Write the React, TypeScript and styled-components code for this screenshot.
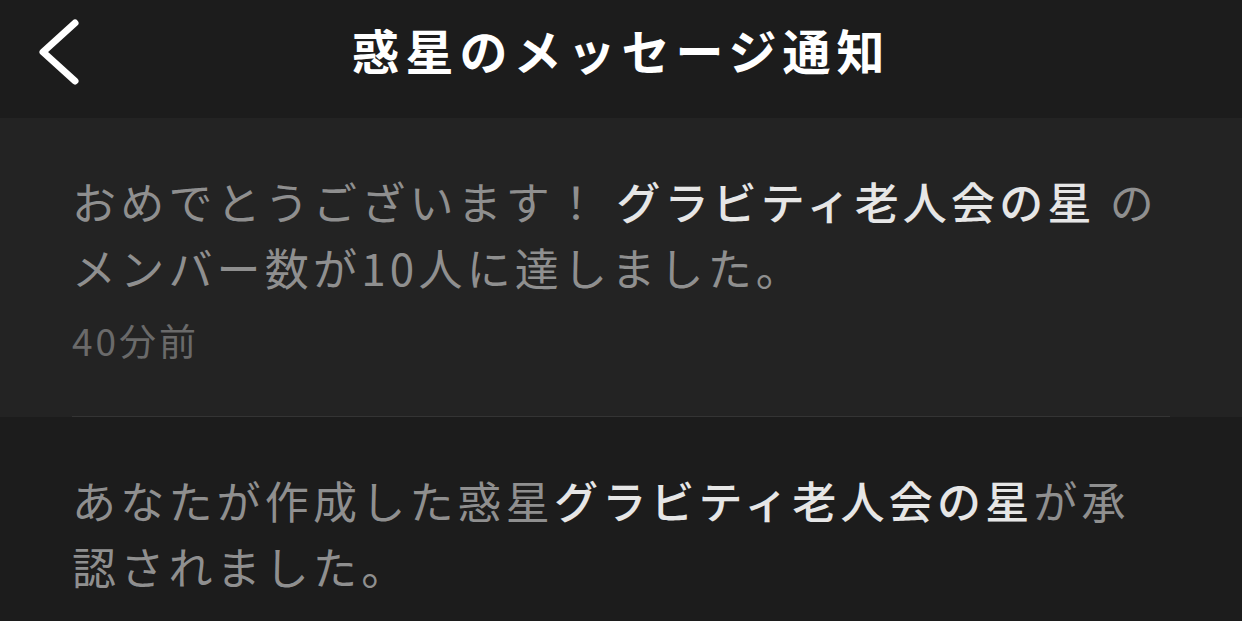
import React from 'react';
import styled, { createGlobalStyle } from 'styled-components';

const GlobalStyle = createGlobalStyle`
  html, body {
    margin: 0;
    padding: 0;
    background: #1c1c1c;
  }
  body {
    font-family: "Noto Sans CJK JP", "Noto Sans", sans-serif;
  }
`;

const Screen = styled.div`
  width: 1242px;
  height: 621px;
  overflow: hidden;
  background: #1c1c1c;
  display: flex;
  flex-direction: column;
`;

const Header = styled.header`
  height: 118px;
  flex: none;
  position: relative;
  display: flex;
  align-items: center;
  justify-content: center;
  background: #1c1c1c;
`;

const BackButton = styled.button`
  position: absolute;
  left: 34px;
  top: 16px;
  width: 50px;
  height: 70px;
  padding: 0;
  border: none;
  background: transparent;
  display: flex;
  align-items: center;
  justify-content: center;
`;

const Title = styled.h1`
  margin: 0 0 20px;
  font-size: 48px;
  font-weight: 700;
  letter-spacing: 6px;
  color: #ffffff;
  line-height: 1;
`;

const Item = styled.div<{ $active?: boolean }>`
  background: ${(p) => (p.$active ? '#232323' : '#1c1c1c')};
  padding: 50px 72px 0;
`;

const ItemBody = styled.div<{ $divider?: boolean }>`
  padding-bottom: ${(p) => (p.$divider ? '54px' : '0')};
  border-bottom: ${(p) => (p.$divider ? '1px solid #343434' : 'none')};
`;

const Message = styled.p`
  margin: 0;
  padding: 0;
  max-width: 1100px;
  font-size: 44px;
  line-height: 66px;
  letter-spacing: 4.2px;
  color: #8f8f8f;
  font-weight: 400;
`;

const Planet = styled.span`
  color: #e6e6e6;
  font-weight: 500;
`;

const Time = styled.div`
  margin-top: 18px;
  font-size: 37px;
  line-height: 44px;
  letter-spacing: 3px;
  color: #6a6a6a;
`;

function ChevronLeft() {
  return (
    <svg width="50" height="70" viewBox="0 0 50 70">
      <polyline
        points="41,7 9,36 41,65"
        fill="none"
        stroke="#ffffff"
        strokeWidth="7"
        strokeLinecap="round"
        strokeLinejoin="round"
      />
    </svg>
  );
}

export default function App() {
  return (
    <Screen>
      <GlobalStyle />
      <Header>
        <BackButton aria-label="戻る">
          <ChevronLeft />
        </BackButton>
        <Title>惑星のメッセージ通知</Title>
      </Header>

      <Item $active>
        <ItemBody $divider>
          <Message>
            おめでとうございます！ <Planet>グラビティ老人会の星</Planet> の<br />
            メンバー数が10人に達しました。
          </Message>
          <Time>40分前</Time>
        </ItemBody>
      </Item>

      <Item>
        <ItemBody>
          <Message>
            あなたが作成した惑星<Planet>グラビティ老人会の星</Planet>が承<br />
            認されました。
          </Message>
        </ItemBody>
      </Item>
    </Screen>
  );
}
